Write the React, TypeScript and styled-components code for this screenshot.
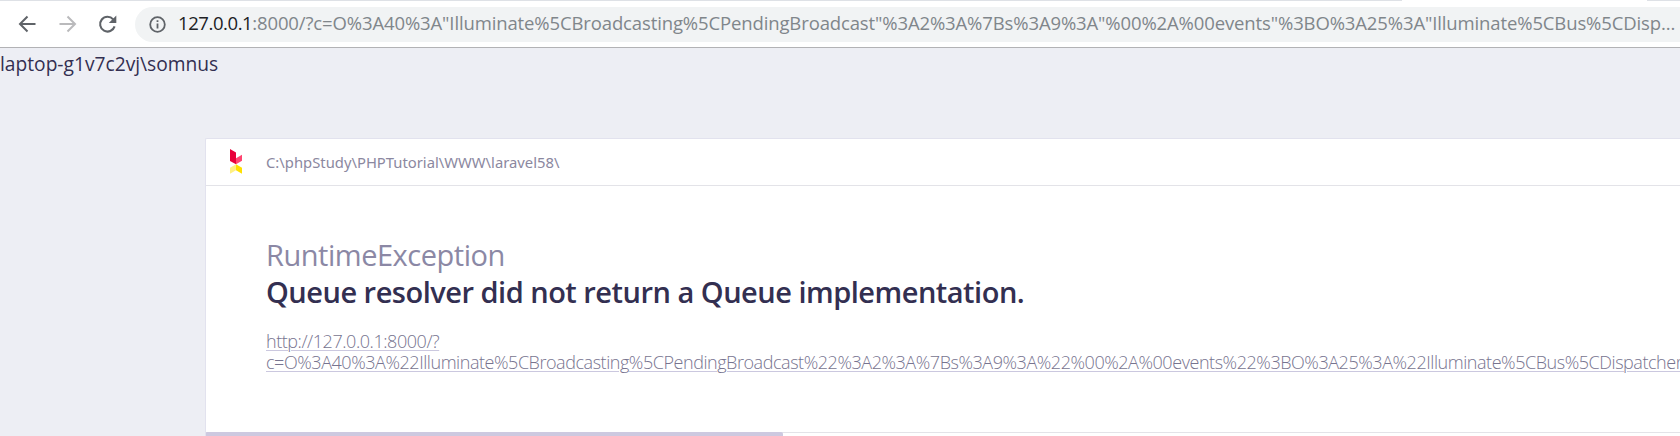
import React from "react";
import styled, { createGlobalStyle } from "styled-components";

const GlobalStyle = createGlobalStyle`
  *, *::before, *::after { box-sizing: border-box; }
  html, body { margin: 0; padding: 0; overflow: hidden; }
  body {
    background: #edeef4;
    font-family: "Open Sans", "Noto Sans", sans-serif;
    color: #332f51;
  }
`;

const Window = styled.div`
  width: 100%;
  height: 436px;
  overflow: hidden;
  display: flex;
  flex-direction: column;
`;

const TabEdge = styled.div`
  flex: none;
  height: 1px;
  display: flex;
  justify-content: space-between;
  background: #fff;
`;

const EdgeSegment = styled.div<{ $width: number }>`
  width: ${(p) => p.$width}px;
  background: #dee1e6;
`;

const Toolbar = styled.header`
  flex: none;
  height: 47px;
  display: flex;
  align-items: center;
  background: #fff;
  border-bottom: 1px solid #b2b2b5;
`;

const NavButtons = styled.nav`
  flex: none;
  width: 135px;
  padding-left: 15px;
  display: flex;
  gap: 16px;
`;

const NavButton = styled.button<{ $muted?: boolean }>`
  width: 24px;
  height: 24px;
  padding: 0;
  border: 0;
  background: none;
  color: ${(p) => (p.$muted ? "#bababc" : "#5f6368")};
  svg { display: block; }
`;

const AddressBar = styled.div`
  flex: 1;
  min-width: 0;
  height: 35px;
  padding-left: 14px;
  display: flex;
  align-items: center;
  gap: 12px;
  background: #f1f3f4;
  border-radius: 18px 0 0 18px;
  color: #5f6368;
  svg { flex: none; }
`;

const Url = styled.span`
  padding-bottom: 2px;
  font-size: 18.5px;
  line-height: 24px;
  white-space: nowrap;
  color: #80868b;
  letter-spacing: -0.125px;
`;

const Host = styled.span`
  color: #202124;
  letter-spacing: -0.42px;
`;

const Output = styled.div`
  flex: none;
  height: 90px;
  padding-top: 3px;
  font-size: 19.2px;
  line-height: 26px;
`;

const Card = styled.main`
  flex: none;
  margin-left: 205px;
  height: 298px;
  display: flex;
  flex-direction: column;
  background: #fff;
  border: 1px solid #e2e2ee;
  border-right: 0;
  border-bottom: 0;
  border-top-left-radius: 2px;
`;

const CardHeader = styled.div`
  flex: none;
  height: 47px;
  padding: 0 0 1px 24px;
  display: flex;
  align-items: center;
  border-bottom: 1px solid #e3e3e8;
`;

const Path = styled.span`
  margin-left: 24px;
  font-family: "Noto Sans", "Open Sans", sans-serif;
  font-size: 14.8px;
  line-height: 20px;
  color: #8b88a0;
`;

const Summary = styled.section`
  flex: 1;
  padding: 50px 0 0 60px;
  white-space: nowrap;
`;

const ExceptionName = styled.div`
  font-size: 29px;
  line-height: 37px;
  letter-spacing: -0.47px;
  color: #8b88a5;
`;

const Message = styled.h1`
  margin: 0;
  font-size: 29px;
  font-weight: 600;
  line-height: 37px;
  letter-spacing: -0.5px;
  color: #332f51;
`;

const RequestLink = styled.a`
  display: block;
  margin-top: 21px;
  font-size: 18px;
  font-weight: 300;
  line-height: 21px;
  letter-spacing: -0.45px;
  color: #77748f;
  text-decoration: underline;
  text-decoration-color: #cbc8df;
  text-decoration-thickness: 1px;
  text-underline-offset: 2px;
`;

const ScrollTrack = styled.div`
  flex: none;
  height: 4px;
  border-top: 1px solid #e3e3e8;
`;

const ScrollThumb = styled.div`
  width: 577px;
  height: 4px;
  margin-top: -1px;
  background: #cdc9e0;
  border-radius: 1px 2px 0 0;
`;

const BackIcon = () => (
  <svg width="24" height="24" viewBox="0 0 24 24" fill="none" stroke="currentColor" strokeWidth="2">
    <path d="M20.5 12H5.5M12.5 4.5L5 12l7.5 7.5" />
  </svg>
);

const ForwardIcon = () => (
  <svg width="24" height="24" viewBox="0 0 24 24" fill="none" stroke="currentColor" strokeWidth="2">
    <path d="M4.5 12h15M12.5 4.5L20 12l-7.5 7.5" />
  </svg>
);

const ReloadIcon = () => (
  <svg width="24" height="24" viewBox="0 0 24 24">
    <path
      d="M18.2 7.4A7.4 7.4 0 1 0 19.6 14.4"
      fill="none"
      stroke="currentColor"
      strokeWidth="2.1"
    />
    <path d="M21.3 3.4v7.5h-7.5z" fill="currentColor" />
  </svg>
);

const InfoIcon = () => (
  <svg width="17" height="17" viewBox="0 0 17 17">
    <circle cx="8.5" cy="8.5" r="7.3" fill="none" stroke="currentColor" strokeWidth="1.8" />
    <path d="M7.6 7.5h1.8v5H7.6zM7.6 4.3h1.8v1.8H7.6z" fill="currentColor" />
  </svg>
);

const IgnitionLogo = () => (
  <svg width="12" height="25" viewBox="0 0 12 25">
    <path d="M0 0l6 3.4v11.9L0 11.9z" fill="#e8003a" />
    <path d="M6 9.2l6-3.4v6l-6 3.5z" fill="#ff4470" />
    <path d="M0 18.7l6-3.4v6L0 24.7z" fill="#fff082" />
    <path d="M6 15.3l6 3.4v6l-6-3.4z" fill="#ffe000" />
  </svg>
);

export default function App() {
  return (
    <Window>
      <GlobalStyle />
      <TabEdge>
        <EdgeSegment $width={1402} />
        <EdgeSegment $width={33} />
      </TabEdge>
      <Toolbar>
        <NavButtons>
          <NavButton aria-label="Back"><BackIcon /></NavButton>
          <NavButton aria-label="Forward" $muted><ForwardIcon /></NavButton>
          <NavButton aria-label="Reload"><ReloadIcon /></NavButton>
        </NavButtons>
        <AddressBar>
          <InfoIcon />
          <Url>
            <Host>127.0.0.1</Host>
            {':8000/?c=O%3A40%3A"Illuminate%5CBroadcasting%5CPendingBroadcast"%3A2%3A%7Bs%3A9%3A"%00%2A%00events"%3BO%3A25%3A"Illuminate%5CBus%5CDisp...'}
          </Url>
        </AddressBar>
      </Toolbar>
      <Output>{"laptop-g1v7c2vj\\somnus"}</Output>
      <Card>
        <CardHeader>
          <IgnitionLogo />
          <Path>{"C:\\phpStudy\\PHPTutorial\\WWW\\laravel58\\"}</Path>
        </CardHeader>
        <Summary>
          <ExceptionName>RuntimeException</ExceptionName>
          <Message>Queue resolver did not return a Queue implementation.</Message>
          <RequestLink>
            http://127.0.0.1:8000/?
            <br />
            c=O%3A40%3A%22Illuminate%5CBroadcasting%5CPendingBroadcast%22%3A2%3A%7Bs%3A9%3A%22%00%2A%00events%22%3BO%3A25%3A%22Illuminate%5CBus%5CDispatcher
          </RequestLink>
        </Summary>
        <ScrollTrack>
          <ScrollThumb />
        </ScrollTrack>
      </Card>
    </Window>
  );
}
